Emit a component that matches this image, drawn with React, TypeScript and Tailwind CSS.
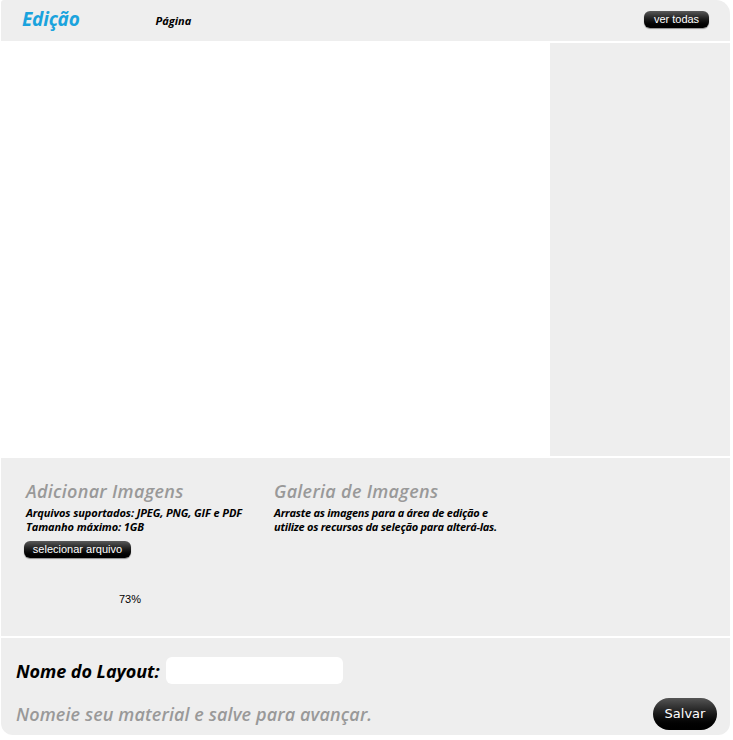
import React from "react";

const myriad = { fontFamily: '"Open Sans", "Noto Sans", sans-serif' };
const arial = { fontFamily: '"Liberation Sans", Arial, sans-serif' };

function DarkBtn({ children, className }: { children: React.ReactNode; className: string }) {
  return (
    <div
      className={
        "flex items-center justify-center text-white bg-gradient-to-b from-[#5a5a5a] via-[#1a1a1a] to-[#000] shadow-[0_1px_1px_rgba(0,0,0,0.4)] " +
        className
      }
      style={arial}
    >
      {children}
    </div>
  );
}

export default function App() {
  return (
    <div className="w-[733px] h-[740px] bg-white pl-[1px] pr-[3px] flex flex-col" style={myriad}>
      {/* header */}
      <div className="h-[41px] bg-[#eeeeee] rounded-tr-[14px] rounded-tl-[3px] flex items-center relative">
        <div className="ml-[21px] text-[19px] font-bold italic text-[#1aa3dd] tracking-[-0.2px] leading-none mt-[-2px]">
          Edição
        </div>
        <div className="ml-[76px] text-[11px] font-bold italic text-black leading-none mt-[-1px]">Página</div>
        <div className="flex-1" />
        <DarkBtn className="w-[65px] h-[17px] rounded-[6px] text-[11px] mr-[21px] mt-[-2px]">ver todas</DarkBtn>
      </div>
      {/* main */}
      <div className="mt-[2px] h-[413px] flex">
        <div className="w-[549px] bg-white" />
        <div className="flex-1 bg-[#eeeeee]" />
      </div>
      {/* images section */}
      <div className="mt-[2px] h-[178px] bg-[#eeeeee] flex">
        <div className="w-[248px] pl-[25px] pt-[22px] flex flex-col">
          <div className="text-[18px] font-semibold italic text-[#999999] leading-[22px] tracking-[0.3px]">
            Adicionar Imagens
          </div>
          <div className="mt-[4px] text-[11px] font-bold italic text-black leading-[14px] tracking-[-0.1px] whitespace-nowrap">
            Arquivos suportados: JPEG, PNG, GIF e PDF
            <br />
            Tamanho máximo: 1GB
          </div>
          <DarkBtn className="mt-[7px] ml-[-2px] w-[107px] h-[17px] rounded-[6px] text-[11px]">selecionar arquivo</DarkBtn>
          <div className="mt-[33px] ml-[93px] text-[11px] text-black" style={arial}>
            73%
          </div>
        </div>
        <div className="pl-[25px] pt-[22px] flex flex-col">
          <div className="text-[18px] font-semibold italic text-[#999999] leading-[22px] tracking-[0.3px]">
            Galeria de Imagens
          </div>
          <div className="mt-[4px] text-[11px] font-bold italic text-black leading-[14px] tracking-[-0.25px] whitespace-nowrap">
            Arraste as imagens para a área de edição e
            <br />
            utilize os recursos da seleção para alterá-las.
          </div>
        </div>
      </div>
      {/* bottom */}
      <div className="mt-[2px] h-[97px] bg-[#eeeeee] rounded-b-[12px] flex flex-col pl-[15px] pr-[13px]">
        <div className="mt-[19px] flex items-center">
          <div className="text-[18px] font-bold italic text-black leading-none tracking-[-0.05px]">Nome do Layout:</div>
          <div className="ml-[6px] w-[177px] h-[27px] bg-white rounded-[6px]" />
        </div>
        <div className="mt-[14px] flex items-center">
          <div className="text-[18px] font-semibold italic text-[#999999] leading-none tracking-[0.12px]">
            Nomeie seu material e salve para avançar.
          </div>
          <div className="flex-1" />
          <div
            className="w-[64px] h-[32px] rounded-full flex items-center justify-center text-white text-[13px] bg-gradient-to-b from-[#555] via-[#1a1a1a] to-[#000]"
            style={{ fontFamily: '"DejaVu Sans", sans-serif' }}
          >
            Salvar
          </div>
        </div>
      </div>
    </div>
  );
}
